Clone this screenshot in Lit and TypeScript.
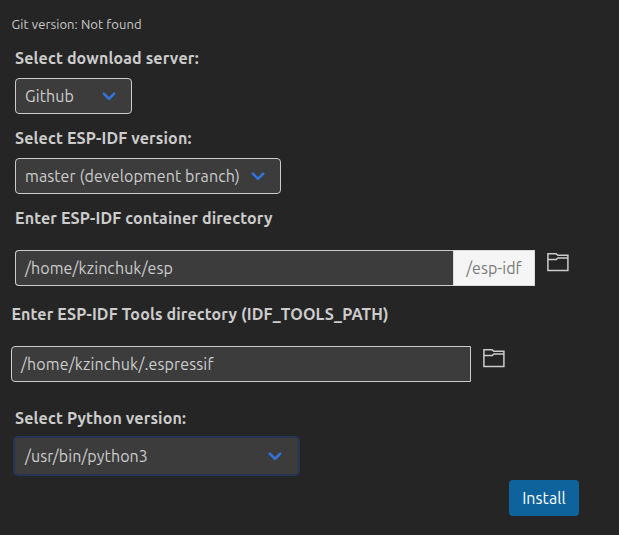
import { LitElement, html, css, svg } from "lit";
import { customElement } from "lit/decorators.js";

const chevron = svg`<svg class="chevron" width="14" height="9" viewBox="0 0 14 9"><path d="M1.8 1.6 7 6.8l5.2-5.2" /></svg>`;

const folder = svg`<svg class="folder" width="22" height="19" viewBox="0 0 22 19"><path d="M.9.8h8.3l1.5 1.5h10.2V17.4H.9zM.9 6.5h8.2l1.7-1.4h10.1" /></svg>`;

@customElement("app-root")
export class AppRoot extends LitElement {
  static styles = css`
    :host {
      display: block;
      box-sizing: border-box;
      height: 535px;
      padding: 14px 40px 0 15px;
      overflow: hidden;
      background: #252525;
      color: #cccccc;
      font: 16px/24px "Ubuntu", "Noto Sans", sans-serif;
      letter-spacing: 0.09px;
      white-space: nowrap;
    }
    * { box-sizing: border-box; }
    .git { margin: 0 0 12px -3.5px; height: 20px; font-size: 13px; line-height: 20px; }
    .label { height: 24px; font-weight: 700; letter-spacing: 0.14px; }
    .outdent { margin-left: -3.6px; }
    .select {
      display: flex;
      align-items: center;
      justify-content: space-between;
      height: 36px;
      margin: 8px 0 12px;
      padding: 0 15px 0 9px;
      border: 1px solid #cccccc;
      border-radius: 4px;
      background: #3c3c3c;
    }
    .server { width: 117px; }
    .version { width: 266px; }
    .python {
      width: 287px;
      height: 40px;
      margin: 6px 0 4px -2px;
      padding: 0 16px 0 10px;
      border: 2px solid #243654;
      border-radius: 5px;
    }
    .chevron { flex: none; fill: none; stroke: #3273dc; stroke-width: 2.5; stroke-linecap: round; stroke-linejoin: round; }
    .row { display: flex; height: 36px; margin: 20px 0 16px; }
    .field {
      height: 36px;
      padding: 0 9px;
      border: 1px solid #cccccc;
      border-radius: 4px 0 0 4px;
      background: #3c3c3c;
      line-height: 34px;
    }
    .container { width: 438px; border-right: 0; }
    .suffix {
      width: 82px;
      border: 1px solid #dbdbdb;
      background: #f5f5f5;
      color: #7a7a7a;
      line-height: 34px;
      text-align: center;
    }
    .tools { width: 460px; letter-spacing: 0.14px; }
    .tools-row { margin: 20px 0 24px -4px; }
    .folder { margin: 3px 0 0 12px; fill: none; stroke: #cccccc; stroke-width: 1.5; }
    .actions { display: flex; justify-content: flex-end; }
    .install {
      width: 70px;
      height: 36px;
      padding: 0;
      border: 0;
      border-radius: 4px;
      background: #0e639c;
      color: #ffffff;
      font: inherit;
      letter-spacing: inherit;
    }
  `;

  render() {
    return html`
      <div class="git">Git version: Not found</div>
      <div class="label">Select download server:</div>
      <div class="select server"><span>Github</span>${chevron}</div>
      <div class="label">Select ESP-IDF version:</div>
      <div class="select version"><span>master (development branch)</span>${chevron}</div>
      <div class="label">Enter ESP-IDF container directory</div>
      <div class="row">
        <div class="field container">/home/kzinchuk/esp</div>
        <div class="suffix">/esp-idf</div>
        ${folder}
      </div>
      <div class="label outdent">Enter ESP-IDF Tools directory (IDF_TOOLS_PATH)</div>
      <div class="row tools-row">
        <div class="field tools">/home/kzinchuk/.espressif</div>
        ${folder}
      </div>
      <div class="label">Select Python version:</div>
      <div class="select python"><span>/usr/bin/python3</span>${chevron}</div>
      <div class="actions"><button class="install">Install</button></div>
    `;
  }
}
